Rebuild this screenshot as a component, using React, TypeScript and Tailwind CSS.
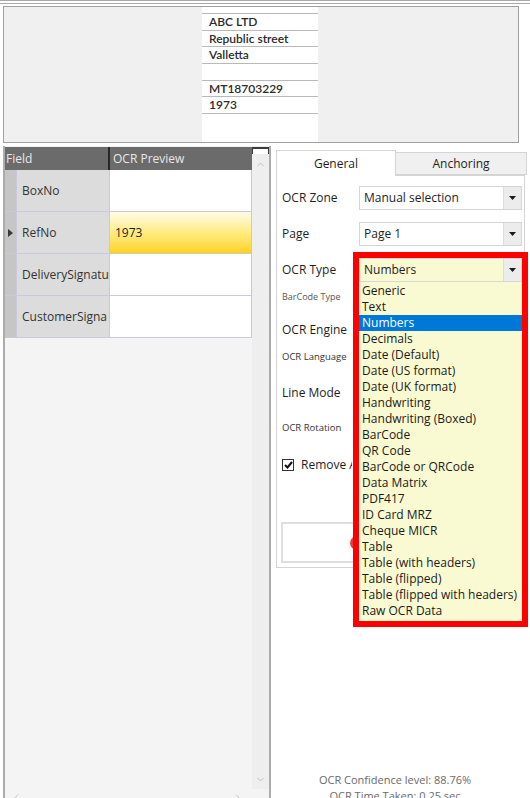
import { ChevronUp, ChevronDown, ChevronLeft, ChevronRight } from 'lucide-react'

const DOC_LINES = ['ABC LTD', 'Republic street', 'Valletta', '', 'MT18703229', '1973']

const FIELDS = [
  { name: 'BoxNo', value: '' },
  { name: 'RefNo', value: '1973', active: true },
  { name: 'DeliverySignatu', value: '' },
  { name: 'CustomerSigna', value: '' },
]

const OCR_TYPES = [
  'Generic', 'Text', 'Numbers', 'Decimals', 'Date (Default)', 'Date (US format)', 'Date (UK format)',
  'Handwriting', 'Handwriting (Boxed)', 'BarCode', 'QR Code', 'BarCode or QRCode', 'Data Matrix',
  'PDF417', 'ID Card MRZ', 'Cheque MICR', 'Table', 'Table (with headers)', 'Table (flipped)',
  'Table (flipped with headers)', 'Raw OCR Data',
]

function Arrow() {
  return (
    <svg width="7" height="4" viewBox="0 0 7 4">
      <polygon points="0,0 7,0 3.5,4" fill="#1a1a1a" />
    </svg>
  )
}

function Combo({ text, yellow }: { text: string; yellow?: boolean }) {
  return (
    <div className={`ml-auto flex h-[24px] w-[163px] border border-[#d6d6d6] ${yellow ? 'bg-[#fafad2]' : 'bg-white'}`}>
      <span className="flex flex-1 items-center pl-[4px] text-[12px]">{text}</span>
      <span className="flex w-[18px] items-center justify-center border-l border-[#dcdcdc] bg-[#ececec]">
        <Arrow />
      </span>
    </div>
  )
}

export default function App() {
  return (
    <div className="relative h-[798px] w-[530px] overflow-hidden bg-white font-['Open_Sans',sans-serif] text-[#1e1e1e]">
      {/* top edge */}
      <div className="h-[4px] border-y border-[#a9a9a9]" />

      {/* document preview */}
      <div className="mx-[3px] mt-[2px] h-[137px] w-[516px] border border-[#a0a0a0] bg-[#f0f0f0] pl-[198px]">
        <div className="h-full w-[116px] bg-white font-['Lato',sans-serif] text-[12px] font-semibold leading-none text-[#2a2a2a]">
          <div className="h-[7px] border-b border-[#b9b9b9]" />
          {DOC_LINES.map((l, i) => (
            <div key={i} className="flex h-[16.7px] items-center border-b border-[#b9b9b9] pl-[7px]">{l}</div>
          ))}
        </div>
      </div>

      <div className="mt-[3px] flex">
        {/* fields grid */}
        <div className="ml-[3px] flex h-[660px] w-[268px] flex-col border-x-2 border-[#acacac] bg-[#f4f4f4]">
          <div className="flex flex-1">
            <div className="flex w-[247px] flex-col">
              <div className="mt-[1px] flex h-[23px] bg-[#6b6b6b] text-[12px] text-[#e8e8e8]">
                <div className="flex w-[105px] items-center border-r-2 border-[#262626] pl-[1px]">Field</div>
                <div className="flex items-center pl-[3px]">OCR Preview</div>
              </div>
              {FIELDS.map(f => (
                <div key={f.name} className="flex h-[42px] border-b border-[#cbc7dd] text-[12px]">
                  <div className="flex w-[11px] items-center justify-center bg-[#c6c6c6]">
                    {f.active && (
                      <svg width="5" height="8" viewBox="0 0 5 8"><polygon points="0,0 5,4 0,8" fill="#3a3a3a" /></svg>
                    )}
                  </div>
                  <div className="flex w-[94px] items-center overflow-hidden whitespace-nowrap border-x border-[#cbc7dd] bg-[#dcdcdc] pl-[5px] text-[#333]">
                    {f.name}
                  </div>
                  <div className={`flex flex-1 items-center border-r border-[#cbc7dd] pl-[5px] ${f.active ? 'bg-gradient-to-b from-[#fffbe8] via-[#ffec80] to-[#ffd200]' : 'bg-white'}`}>
                    {f.value}
                  </div>
                </div>
              ))}
              <div className="flex-1 rounded-br-[3px] bg-[#f4f4f4]" />
            </div>
            <div className="flex w-[17px] flex-col items-center bg-[#eeeeee]">
              <div className="mt-[1px] h-[7px] w-full border-x border-t-2 border-[#3c3c3c] bg-white" />
              <ChevronUp size={11} strokeWidth={1.6} className="mt-[5px] text-[#b0b0b0]" />
              <ChevronDown size={11} strokeWidth={1.6} className="mb-[4px] mt-auto text-[#b0b0b0]" />
            </div>
          </div>
          <div className="flex h-[17px] items-center justify-between px-[6px]">
            <ChevronLeft size={11} strokeWidth={1.6} className="text-[#b0b0b0]" />
            <ChevronRight size={11} strokeWidth={1.6} className="mr-[20px] text-[#b0b0b0]" />
          </div>
        </div>

        {/* properties */}
        <div className="flex flex-1 flex-col pl-[5px] pt-[3px]">
          <div className="flex h-[26px] items-end text-[12px]">
            <div className="relative z-10 -mb-px flex h-[26px] w-[120px] items-center justify-center border border-b-0 border-[#d4d4d4] bg-white">
              General
            </div>
            <div className="flex h-[23px] w-[131px] items-center justify-center border border-l-0 border-[#d4d4d4] bg-[#f0f0f0]">
              Anchoring
            </div>
          </div>
          <div className="flex h-[393px] w-[249px] flex-col border border-[#d4d4d4] pl-[5px] pr-[2px] pt-[10px] text-[12px]">
            <div className="flex h-[24px] items-center">
              <span>OCR Zone</span>
              <Combo text="Manual selection" />
            </div>
            <div className="mt-[12px] flex h-[24px] items-center">
              <span>Page</span>
              <Combo text="Page 1" />
            </div>
            <div className="mt-[12px] flex h-[24px] items-center">
              <span>OCR Type</span>
              <Combo text="Numbers" yellow />
            </div>
            <div className="mt-[3px] flex h-[24px] items-center text-[9px] text-[#555]">BarCode Type</div>
            <div className="mt-[9px] flex h-[24px] items-center">OCR Engine</div>
            <div className="mt-[3px] flex h-[24px] items-center text-[9.5px] text-[#333]">OCR Language</div>
            <div className="mt-[12px] flex h-[24px] items-center">Line Mode</div>
            <div className="mt-[11px] flex h-[24px] items-center text-[9.5px] text-[#333]">OCR Rotation</div>
            <div className="mt-[13px] flex h-[24px] items-center gap-[7px]">
              <span className="flex h-[12px] w-[12px] items-center justify-center border border-[#333] bg-white">
                <svg width="9" height="8" viewBox="0 0 9 8"><path d="M1 4 L3.5 6.5 L8 1" stroke="#111" strokeWidth="2" fill="none" /></svg>
              </span>
              <span className="w-[51px] overflow-hidden whitespace-nowrap">Remove All Spaces</span>
            </div>
            <div className="-ml-[1px] mt-[45px] flex h-[41px] w-[238px] items-center border-2 border-[#dedede] pl-[67px]">
              <span className="h-[14px] w-[14px] rounded-full bg-[#e0413a]" />
            </div>
          </div>
          <div className="mt-[204px] pr-[16px] text-center text-[11px] leading-[16px] text-[#6a6a6a]">
            <div>OCR Confidence level: 88.76%</div>
            <div>OCR Time Taken: 0.25 sec</div>
          </div>
        </div>
      </div>

      {/* open OCR Type list */}
      <div className="absolute left-[359px] top-[282px] w-[163px] bg-[#fafad2] pt-[1px] text-[12px] leading-[16px] text-[#1a1a1a]">
        {OCR_TYPES.map(t => (
          <div key={t} className={`h-[16px] whitespace-nowrap pl-[3px] ${t === 'Numbers' ? 'bg-[#0078d7] text-white' : ''}`}>{t}</div>
        ))}
        <div className="h-[3px]" />
      </div>

      {/* highlight annotation */}
      <div className="pointer-events-none absolute left-[353px] top-[252px] h-[375px] w-[175px] border-[6px] border-[#ff0000]" />
    </div>
  )
}
